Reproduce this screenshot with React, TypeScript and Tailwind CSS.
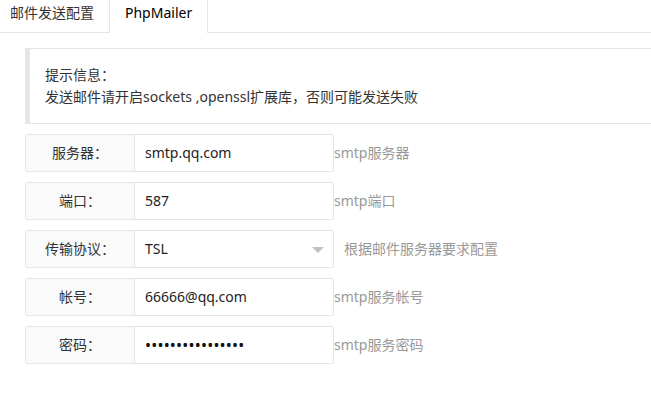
import React from "react";

const font = { fontFamily: '"Noto Sans", "Noto Sans CJK SC", sans-serif' };

type Row = { label: string; value: string; help: string; select?: boolean; password?: boolean };

const rows: Row[] = [
  { label: "服务器：", value: "smtp.qq.com", help: "smtp服务器" },
  { label: "端口：", value: "587", help: "smtp端口" },
  { label: "传输协议：", value: "TSL", help: "根据邮件服务器要求配置", select: true },
  { label: "帐号：", value: "66666@qq.com", help: "smtp服务帐号" },
  { label: "密码：", value: "••••••••••••••••", help: "smtp服务密码", password: true },
];

export default function App() {
  return (
    <div className="w-[651px] h-[408px] bg-white overflow-hidden text-[14px] text-[#333]" style={font}>
      <ul className="flex h-[33px] border-b border-[#e6e6e6]">
        <li className="h-[32px] pl-[10px] pr-[15px] leading-[26px] text-[#333]">邮件发送配置</li>
        <li className="h-[33px] px-[15px] border-x border-[#e6e6e6] bg-white leading-[26px] text-[#000]">PhpMailer</li>
      </ul>
      <div className="pl-[25px] pt-[15px]">
        <div className="border border-[#e6e6e6] border-l-[5px] p-[15px] leading-[22px] mb-[10px] w-[700px]">
          <div>提示信息：</div>
          <div>发送邮件请开启sockets ,openssl扩展库，否则可能发送失败</div>
        </div>
        {rows.map((r) => (
          <div key={r.label} className="flex items-center h-[38px] mb-[10px]">
            <div className="w-[110px] h-[38px] border border-[#e6e6e6] bg-[#fafafa] rounded-l-[2px] text-center leading-[36px] text-[#333]">
              {r.label}
            </div>
            <div className="relative w-[200px] h-[38px] -ml-px border border-[#e6e6e6] rounded-r-[2px] bg-white pl-[10px] leading-[36px] text-[#222]">
              {r.password ? <span className="text-[16px] tracking-[0.2px] text-[#111]">{r.value}</span> : r.value}
              {r.select && (
                <span className="absolute right-[9px] top-[16px] w-0 h-0 border-l-[6px] border-r-[6px] border-t-[6px] border-l-transparent border-r-transparent border-t-[#c2c2c2]" />
              )}
            </div>
            <div className={`${r.select ? "ml-[10px]" : "ml-0"} text-[#999] leading-[20px]`}>{r.help}</div>
          </div>
        ))}
      </div>
    </div>
  );
}
